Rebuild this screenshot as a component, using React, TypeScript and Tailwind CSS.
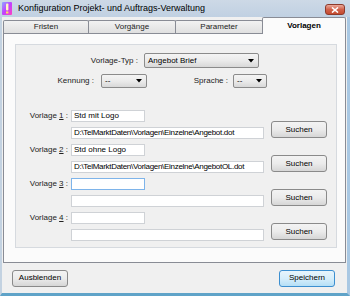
import type { ReactNode } from "react";

const FONT = { fontFamily: '"Liberation Sans", Arial, sans-serif' };

function AppIcon() {
  return (
    <svg width="10" height="13" viewBox="0 0 10 13">
      <defs>
        <linearGradient id="ig" x1="0" y1="0" x2="1" y2="1">
          <stop offset="0" stopColor="#8ea8ff" />
          <stop offset="0.5" stopColor="#c040ff" />
          <stop offset="1" stopColor="#ff40c0" />
        </linearGradient>
      </defs>
      <rect x="0" y="0" width="10" height="13" rx="1" fill="url(#ig)" />
      <rect x="4" y="1.5" width="2.4" height="7" rx="1" fill="#fff7c0" />
      <rect x="4" y="9.5" width="2.4" height="2" fill="#ffe060" />
    </svg>
  );
}

function CloseButton() {
  return (
    <div className="w-[20px] h-[11px] rounded-[3px] border border-[#8d3a2b] bg-gradient-to-b from-[#e9a99b] via-[#d1614a] to-[#c44a2e] flex items-center justify-center">
      <svg width="8" height="6" viewBox="0 0 8 6">
        <path d="M1 0.5 L7 5.5 M7 0.5 L1 5.5" stroke="#fff" strokeWidth="1.6" />
      </svg>
    </div>
  );
}

function Tab({ label, active, width }: { label: string; active?: boolean; width: string }) {
  if (active) {
    return (
      <div
        className={`${width} h-[17px] -mb-[1px] relative z-10 bg-[#fbfbfb] border border-b-0 border-[#898c95] rounded-t-[2px] flex items-center justify-center font-bold text-[8px] text-black`}
      >
        {label}
      </div>
    );
  }
  return (
    <div
      className={`${width} h-[13px] border border-b-0 border-[#898c95] rounded-t-[2px] bg-gradient-to-b from-[#f2f2f2] to-[#e0e0e0] flex items-center justify-center text-[8px] text-[#222] -mr-[1px]`}
    >
      {label}
    </div>
  );
}

function Combo({ value, width, height = "h-[14px]" }: { value: string; width: string; height?: string }) {
  return (
    <div
      className={`${width} ${height} rounded-[2px] border border-[#8b8b8b] bg-gradient-to-b from-[#f4f4f4] via-[#ebebeb] to-[#d8d8d8] flex items-center pl-[3px] pr-[4px] text-[8px] text-black`}
    >
      <span className="flex-1">{value}</span>
      <svg width="6" height="4" viewBox="0 0 6 4">
        <path d="M0 0 H6 L3 3.5 Z" fill="#000" />
      </svg>
    </div>
  );
}

function TextBox({
  value,
  width,
  focused,
  narrow,
}: {
  value?: string;
  width: string;
  focused?: boolean;
  narrow?: boolean;
}) {
  return (
    <div
      className={`${width} h-[12px] bg-white border ${
        focused ? "border-[#7eb4ea]" : "border-[#cfd2d6]"
      } ${narrow ? "tracking-[-0.3px]" : ""} flex items-center pl-[2px] text-[8px] text-black whitespace-nowrap overflow-hidden`}
    >
      {value}
    </div>
  );
}

function Button({ children, width, primary }: { children: ReactNode; width: string; primary?: boolean }) {
  return (
    <div
      className={`${width} h-[17px] rounded-[3px] border ${
        primary
          ? "border-[#3c8fd0] bg-gradient-to-b from-[#e8f5fc] via-[#d6eefb] to-[#b5dff6]"
          : "border-[#8a8a8a] bg-gradient-to-b from-[#f3f3f3] via-[#ebebeb] to-[#d6d6d6]"
      } flex items-center justify-center text-[8px] text-black`}
    >
      {children}
    </div>
  );
}

function VorlageBlock({
  n,
  name,
  path,
  focused,
}: {
  n: number;
  name?: string;
  path?: string;
  focused?: boolean;
}) {
  return (
    <div className="flex items-end">
      <div className="flex flex-col">
        <div className="flex items-center">
          <div className="w-[53px] text-right text-[8px] text-[#222] pr-[1px]">
            Vorlage <span className="underline">{n}</span> :
          </div>
          <div className="ml-[2px]">
            <TextBox value={name} width="w-[74px]" focused={focused} />
          </div>
        </div>
        <div className="ml-[55px] mt-[5px]">
          <TextBox value={path} width="w-[193px]" narrow />
        </div>
      </div>
      <div className="ml-[7px] mb-[1px]">
        <Button width="w-[56px]">Suchen</Button>
      </div>
    </div>
  );
}

export default function App() {
  return (
    <div style={FONT} className="w-[350px] h-[296px] flex flex-col bg-[#f0f0f0] overflow-hidden">
      {/* Title bar */}
      <div className="h-[17px] flex items-start bg-gradient-to-b from-[#cdd9e6] to-[#c0d0e2] pl-[2px] pt-[2px]">
        <AppIcon />
        <span className="ml-[6px] text-[9px] leading-[13px] text-black">
          Konfiguration Projekt- und Auftrags-Verwaltung
        </span>
        <div className="ml-auto mr-[5px] mt-[2px]">
          <CloseButton />
        </div>
      </div>

      <div className="flex-1 flex border-l-[2px] border-r-[3px] border-b-[3px] border-l-[#c3d2e1] border-r-[#a9c8e3] border-b-[#5fa3c8] bg-[#f0f0f0]">
        <div className="flex-1 flex flex-col">
          {/* Tabs */}
          <div className="h-[16px] flex items-end pl-[1px]">
            <Tab label="Fristen" width="w-[86px]" />
            <Tab label="Vorgänge" width="w-[88px]" />
            <Tab label="Parameter" width="w-[88px]" />
            <Tab label="Vorlagen" active width="w-[84px]" />
          </div>

          {/* Tab page */}
          <div className="ml-[1px] w-[343px] h-[230px] border border-[#898c95] bg-[#fbfbfb] pt-[10px] pl-[11px]">
            <div className="w-[322px] h-[204px] border border-[#d6dadf] bg-[#f0f0f0] flex flex-col pt-[8px]">
              <div className="flex items-center">
                <div className="w-[122px] text-right text-[8px] text-[#222]">Vorlage-Typ :</div>
                <div className="ml-[6px]">
                  <Combo value="Angebot Brief" width="w-[115px]" height="h-[15px]" />
                </div>
              </div>
              <div className="flex items-center mt-[6px]">
                <div className="w-[78px] text-right text-[8px] text-[#222]">Kennung :</div>
                <div className="ml-[7px]">
                  <Combo value="--" width="w-[46px]" />
                </div>
                <div className="w-[81px] text-right text-[8px] text-[#222]">Sprache :</div>
                <div className="ml-[5px]">
                  <Combo value="--" width="w-[34px]" />
                </div>
              </div>

              <div className="flex flex-col gap-[5px] mt-[22px]">
                <VorlageBlock n={1} name="Std mit Logo" path="D:\TelMarktDaten\Vorlagen\Einzelne\Angebot.dot" />
                <VorlageBlock n={2} name="Std ohne Logo" path="D:\TelMarktDaten\Vorlagen\Einzelne\AngebotOL.dot" />
                <VorlageBlock n={3} focused />
                <VorlageBlock n={4} />
              </div>
            </div>
          </div>

          {/* Bottom buttons */}
          <div className="flex-1 flex items-center justify-between pl-[10px] pr-[12px]">
            <Button width="w-[56px]">Ausblenden</Button>
            <Button width="w-[56px]" primary>
              Speichern
            </Button>
          </div>
        </div>
      </div>
    </div>
  );
}
